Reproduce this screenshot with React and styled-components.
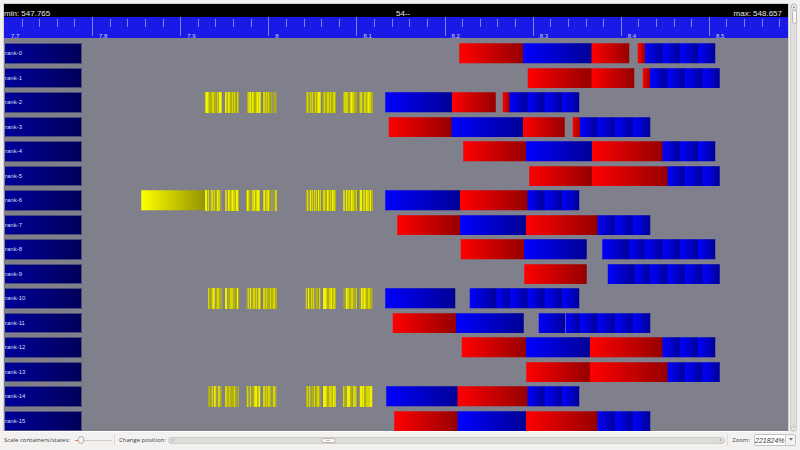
import React, { useState } from "react";
import styled, { createGlobalStyle } from "styled-components";

const GlobalStyle = createGlobalStyle`
  * { box-sizing: border-box; }
  body {
    margin: 0;
    background: #f2f1f0;
    color: #3c3c3c;
    font-family: "Open Sans", "Noto Sans", sans-serif;
    font-size: 6px;
  }
`;

const Page = styled.main`
  min-height: 100vh;
  display: grid;
  grid-template-rows: 1fr 18px;
  padding-top: 3px;
`;

const Workspace = styled.section`
  display: grid;
  grid-template-columns: 1fr 7px;
  gap: 1px;
  padding: 0 3px;
`;

const Canvas = styled.div`
  display: grid;
  grid-template-rows: 13px 21px 1fr;
  border: 1px solid #d4d2d0;
  border-bottom-color: #ffffff;
  background: #80808c;
  font-family: "Liberation Sans", Arial, sans-serif;
`;

const Summary = styled.header`
  display: grid;
  grid-template-columns: 50% auto 1fr;
  align-items: end;
  background: #000;
  color: #e6e6e6;
  font-size: 8px;
  line-height: 6px;
  white-space: nowrap;

  span:last-child {
    padding-right: 6px;
    text-align: right;
  }
`;

const Ruler = styled.div`
  display: flex;
  overflow: hidden;
  background: #1a1ae6;
`;

const Division = styled.div`
  flex: 0 0 calc(100% * 88 / 783);
  display: grid;
  grid-template-columns: repeat(5, 1fr);
  grid-template-rows: 10px 11px;
`;

const Tick = styled.i`
  height: ${(p) => (p.$major ? 19 : 8)}px;
  margin-top: ${(p) => (p.$major ? 0 : 2)}px;
  border-left: 1px solid ${(p) => (p.$first ? "transparent" : "#8080f2")};
`;

const TickLabel = styled.span`
  grid-column: 1 / -1;
  padding: 6px 0 0 7px;
  color: #d0d0fa;
  font-size: 6px;
  line-height: 6px;
`;

const Rows = styled.div`
  display: grid;
  grid-auto-rows: 1fr;
  padding-top: 1px;
`;

const Row = styled.div`
  display: grid;
  grid-template-columns: 78px 1fr;
  gap: 1px;
  padding-top: 4px;
`;

const RankLabel = styled.div`
  display: flex;
  align-items: center;
  margin-left: 1px;
  border: 1px solid #4c4c78;
  border-left: 0;
  background: linear-gradient(to right, #000099, #00005a);
  color: #dcdcf0;
  font-size: 6px;
  line-height: 8px;
`;

const Track = styled.svg`
  display: block;
  width: 100%;
  height: 0;
  min-height: 100%;
`;

const VerticalBar = styled.div`
  display: grid;
  grid-template-rows: 6px 1fr 6px;
  justify-items: center;
  border: 1px solid #d0cecb;
  border-radius: 4px;
  background: #e2e0de;
`;

const Trough = styled.div`
  width: 5px;
`;

const VerticalThumb = styled.div`
  height: 14px;
  border: 1px solid #b8b5b2;
  border-radius: 3px;
  background: #f8f7f6;
`;

const StepButton = styled.button`
  display: grid;
  place-items: center;
  width: 6px;
  height: 6px;
  padding: 0;
  border: 1px solid #c8c5c2;
  border-radius: 3px;
  background: #f4f3f2;

  svg { width: 2px; height: 2px; }
`;

const Toolbar = styled.footer`
  display: flex;
  align-items: center;
  padding: 0 4px 2px;
  line-height: 10px;
  white-space: nowrap;
`;

const Separator = styled.i`
  width: 1px;
  height: 12px;
  margin: 0 4px 0 2px;
  background: #dcdad8;
`;

const ToolLabel = styled.label`
  flex: none;
  font-size: 6px;
`;

const ScaleSlider = styled.input`
  appearance: none;
  width: 37px;
  height: 10px;
  margin: 0 0 0 5px;
  background: linear-gradient(to right, #e87a50 4px, #cfccc9 4px) center / 100% 1px no-repeat;

  &::-webkit-slider-thumb {
    appearance: none;
    width: 6px;
    height: 8px;
    border: 1px solid #b0adaa;
    border-radius: 3px;
    background: #f6f5f4;
  }
`;

const PositionBar = styled.div`
  flex: 1;
  display: flex;
  align-items: center;
  height: 7px;
  margin-left: 2px;
  border: 1px solid #d0cecb;
  border-radius: 4px;
  background: #dfdddb;
`;

const PositionSlider = styled.input`
  appearance: none;
  flex: 1;
  min-width: 0;
  height: 5px;
  margin: 0;
  background: transparent;

  &::-webkit-slider-thumb {
    appearance: none;
    width: 15px;
    height: 5px;
    border: 1px solid #b8b5b2;
    border-radius: 3px;
    background: linear-gradient(#c0bdba, #c0bdba) center / 4px 1px no-repeat #f8f7f6;
  }
`;

const Combo = styled.div`
  display: flex;
  width: 42px;
  height: 12px;
  margin-left: 4px;
  border: 1px solid #c4c1be;
  border-radius: 2px;
  background: #fff;
`;

const ZoomField = styled.input`
  flex: 1;
  min-width: 0;
  padding: 0;
  border: 0;
  border-right: 1px solid #d0cdca;
  background: transparent;
  color: #3c3c3c;
  font: italic 7px "Liberation Sans", sans-serif;
`;

const ComboButton = styled.button`
  display: grid;
  place-items: center;
  width: 9px;
  padding: 0;
  border: 0;
  border-radius: 2px;
  background: #f5f4f3;

  svg { width: 4px; height: 4px; }
`;

const Palette = styled.svg`
  position: absolute;
  width: 0;
  height: 0;
`;

const TRACK_START = 83;
const FILLS = { r: "url(#red)", b: "url(#blue)", y: "url(#yellow)" };
const SHADES = ["#80808c", "#989860", "#b0b010", "#d4d408", "#f2f200"];

// Tails shared by several ranks: a colour per letter, then the state edges.
const LATE_TAIL = ["bbb", 667.5, 685, 702.5, 720];
const LONG_TAIL = ["bbb", 662.5, 680, 698, 715.5];
const MID_TAIL = ["bbb", 597.5, 615, 633, 650.5];
const EARLY_TAIL = ["bbb", 527.5, 545, 562, 579.5];

function into([tailColors, ...tailEdges], colors, ...edges) {
  return [colors + tailColors, ...edges, ...tailEdges];
}

const RANKS = [
  { runs: [["rbr", 459, 523, 591.5, 629.5], into(LONG_TAIL, "rb", 637.5, 645)] },
  { runs: [["rr", 527.5, 591.5, 634.5], into(LATE_TAIL, "rb", 642.5, 650)] },
  {
    runs: [["br", 385, 452, 496], into(EARLY_TAIL, "rb", 502.5, 509.5)],
    bursts: [
      [205, "34432223322132443"],
      [225, "43243223232132"],
      [247, "23342432234343"],
      [263, "33232321211221"],
      [306, "232132312323443"],
      [322, "12322332322332"],
      [343, "23333123433222"],
      [359, "23321332343322"],
    ],
  },
  { runs: [["rbr", 388.5, 451.5, 523, 565], into(MID_TAIL, "rb", 572.5, 580)] },
  { runs: [into(LONG_TAIL, "rbr", 463, 526, 592)] },
  { runs: [into(LATE_TAIL, "rr", 529, 592)] },
  {
    runs: [["y", 141, 205], into(EARLY_TAIL, "br", 385, 460)],
    bursts: [
      [205, "44231133231243311"],
      [225, "33143234332442"],
      [246, "24321133423443"],
      [263, "34233421111133"],
      [306, "232142313231423"],
      [322, "13322432324332"],
      [343, "33142332433223"],
      [359, "24413324332422"],
    ],
  },
  { runs: [into(MID_TAIL, "rbr", 397, 460, 526)] },
  { runs: [["rb", 460.5, 524, 587], into(LONG_TAIL, "bbb", 602, 629.5, 645)] },
  { runs: [["r", 524, 587], into(LATE_TAIL, "bbb", 607.5, 634.5, 650)] },
  {
    runs: [["b", 385, 455.5], into(EARLY_TAIL, "bbb", 469.5, 496.5, 510)],
    bursts: [
      [208, "321234312332211"],
      [225, "44122333221242"],
      [246, "123141233231342"],
      [263, "33232223223322"],
      [305, "1314213231122131"],
      [323, "4443223342332"],
      [343, "11243322332213"],
      [359, "11433432233221"],
    ],
  },
  { runs: [["rb", 392.5, 456, 524], into(MID_TAIL, "bbb", 538.5, 565.5, 580)], mark: 565.5 },
  { runs: [into(LONG_TAIL, "rbr", 461.5, 526, 590)] },
  { runs: [into(LATE_TAIL, "rr", 526, 590)] },
  {
    runs: [into(EARLY_TAIL, "br", 386, 457.5)],
    bursts: [
      [208, "22123143113321"],
      [225, "33223222232112"],
      [246, "132131123442341"],
      [263, "33232332113321"],
      [306, "231321223123321"],
      [323, "4443223332433"],
      [343, "32214442213332"],
      [359, "14434223333441"],
    ],
  },
  { runs: [into(MID_TAIL, "rbr", 394, 457.5, 526)] },
];

const DIVISIONS = ["7.7", "7.8", "7.9", "8", "8.1", "8.2", "8.3", "8.4", "8.5"];
const ARROWS = {
  up: "M0 3 1.5 0 3 3Z",
  down: "M0 0H3L1.5 2Z",
  left: "M3 0V3L0 1.5Z",
  right: "M0 0 3 1.5 0 3Z",
};

function Arrow({ direction }) {
  return (
    <svg viewBox="0 0 3 3" aria-hidden="true">
      <path d={ARROWS[direction]} fill="#777" />
    </svg>
  );
}

function Gradient({ id, from, to }) {
  return (
    <linearGradient id={id}>
      <stop offset="0" stopColor={from} />
      <stop offset="1" stopColor={to} />
    </linearGradient>
  );
}

// Each state reaches one unit under its successor so no background shows between them.
function StateRun({ colors, edges }) {
  const last = edges.length - 1;
  return (
    <g>
      {[...colors].map((color, i) => {
        const end = edges[i + 1] + (i + 1 < last ? 1 : 0);
        return <rect key={i} x={edges[i]} width={end - edges[i]} height="21" fill={FILLS[color]} />;
      })}
      <rect
        x={edges[0]} width={edges[last] - edges[0]} height="21"
        fill="none" stroke="#80808c" strokeOpacity="0.5"
      />
    </g>
  );
}

function StateTrack({ rank }) {
  return (
    <Track viewBox={`${TRACK_START} 0 705 21`} preserveAspectRatio="none">
      {rank.runs.map(([colors, ...edges]) => (
        <StateRun key={edges[0]} colors={colors} edges={edges} />
      ))}
      {(rank.bursts || []).map(([x, shades]) => (
        <g key={x} shapeRendering="crispEdges">
          {[...shades].map((shade, i) => (
            <rect key={i} x={x + i} width="1" height="21" fill={SHADES[shade]} />
          ))}
        </g>
      ))}
      {rank.mark && <path d={`M${rank.mark} 0V21`} stroke="#5050d8" />}
    </Track>
  );
}

export default function App() {
  const [scale, setScale] = useState(10);
  const [position, setPosition] = useState(276);
  const [zoom, setZoom] = useState("221824%");

  return (
    <Page>
      <GlobalStyle />
      <Palette aria-hidden="true">
        <defs>
          <Gradient id="red" from="#ff0000" to="#940000" />
          <Gradient id="blue" from="#0000ff" to="#000094" />
          <Gradient id="yellow" from="#ffff00" to="#949400" />
        </defs>
      </Palette>
      <Workspace>
        <Canvas>
          <Summary>
            <span>min: 547.765</span>
            <span>54--</span>
            <span>max: 548.657</span>
          </Summary>
          <Ruler>
            {DIVISIONS.map((label, i) => (
              <Division key={label}>
                <Tick $major $first={i === 0} />
                <Tick />
                <Tick />
                <Tick />
                <Tick />
                <TickLabel>{label}</TickLabel>
              </Division>
            ))}
          </Ruler>
          <Rows>
            {RANKS.map((rank, i) => (
              <Row key={i}>
                <RankLabel>rank-{i}</RankLabel>
                <StateTrack rank={rank} />
              </Row>
            ))}
          </Rows>
        </Canvas>
        <VerticalBar>
          <StepButton aria-label="Scroll up"><Arrow direction="up" /></StepButton>
          <Trough role="scrollbar" aria-label="Containers" aria-orientation="vertical" aria-valuenow={0}>
            <VerticalThumb />
          </Trough>
          <StepButton aria-label="Scroll down"><Arrow direction="down" /></StepButton>
        </VerticalBar>
      </Workspace>
      <Toolbar>
        <ToolLabel htmlFor="scale">Scale containers/states:</ToolLabel>
        <ScaleSlider id="scale" type="range" value={scale} onChange={(e) => setScale(+e.target.value)} />
        <Separator />
        <ToolLabel htmlFor="position">Change position:</ToolLabel>
        <PositionBar>
          <StepButton aria-label="Move left" onClick={() => setPosition(position - 10)}><Arrow direction="left" /></StepButton>
          <PositionSlider
            id="position" type="range" min="0" max="1000"
            value={position} onChange={(e) => setPosition(+e.target.value)}
          />
          <StepButton aria-label="Move right" onClick={() => setPosition(position + 10)}><Arrow direction="right" /></StepButton>
        </PositionBar>
        <Separator />
        <ToolLabel htmlFor="zoom">Zoom:</ToolLabel>
        <Combo>
          <ZoomField id="zoom" value={zoom} onChange={(e) => setZoom(e.target.value)} />
          <ComboButton aria-label="Zoom levels"><Arrow direction="down" /></ComboButton>
        </Combo>
      </Toolbar>
    </Page>
  );
}
